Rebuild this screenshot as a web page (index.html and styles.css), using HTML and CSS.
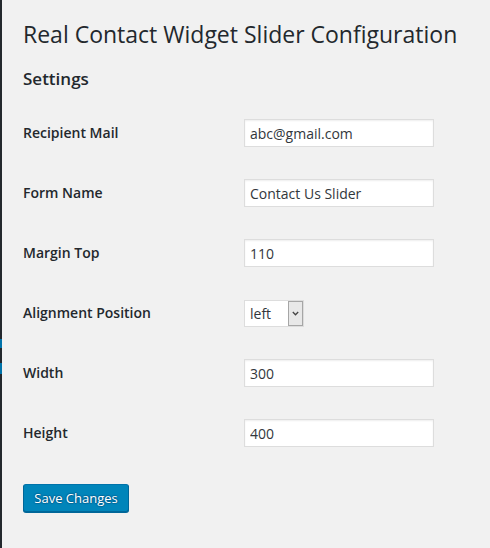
FILE: index.html
```html
<!DOCTYPE html>
<html>
<head>
<meta charset="utf-8">
<link rel="stylesheet" href="styles.css">
</head>
<body>
<div class="page">
  <div class="edge">
    <div class="edge-gap-a"></div>
    <div class="edge-blue edge-blue-a"></div>
    <div class="edge-gap-b"></div>
    <div class="edge-blue edge-blue-b"></div>
  </div>
  <div class="wrap">
    <h1 class="title">Real Contact Widget Slider Configuration</h1>
    <h2 class="section">Settings</h2>
    <form class="form">
      <div class="row">
        <label class="label">Recipient Mail</label>
        <div class="field"><input class="text" type="text" value="abc@gmail.com"></div>
      </div>
      <div class="row">
        <label class="label">Form Name</label>
        <div class="field"><input class="text" type="text" value="Contact Us Slider"></div>
      </div>
      <div class="row">
        <label class="label">Margin Top</label>
        <div class="field"><input class="text" type="text" value="110"></div>
      </div>
      <div class="row">
        <label class="label">Alignment Position</label>
        <div class="field">
          <div class="select-wrap">
            <select class="select"><option>left</option><option>right</option></select>
            <span class="select-arrow"><svg width="7" height="5" viewBox="0 0 7 5"><path d="M0.8 1 L3.5 3.8 L6.2 1" fill="none" stroke="#444" stroke-width="1.3"/></svg></span>
          </div>
        </div>
      </div>
      <div class="row">
        <label class="label">Width</label>
        <div class="field"><input class="text" type="text" value="300"></div>
      </div>
      <div class="row">
        <label class="label">Height</label>
        <div class="field"><input class="text" type="text" value="400"></div>
      </div>
      <div class="submit">
        <button type="button" class="button">Save Changes</button>
      </div>
    </form>
  </div>
</div>
</body>
</html>
```
FILE: styles.css
```css
html, body {
  margin: 0;
  padding: 0;
  background: #f1f1f1;
  height: 100%;
}
body {
  font-family: "Open Sans", "Noto Sans", sans-serif;
  color: #23282d;
  font-size: 13px;
}
.page {
  display: flex;
  min-height: 548px;
}
.edge {
  width: 2px;
  background: #23282d;
  flex: none;
  display: flex;
  flex-direction: column;
}
.edge-gap-a { height: 339px; }
.edge-gap-b { height: 15px; }
.edge-blue { background: #0073aa; }
.edge-blue-a { height: 9px; }
.edge-blue-b { height: 11px; }
.wrap {
  padding: 10px 0 0 21px;
  flex: 1;
}
.title {
  font-size: 23px;
  font-weight: 400;
  line-height: 29px;
  margin: 0;
  padding: 10px 0 4px 0;
}
.section {
  font-size: 17px;
  font-weight: 600;
  line-height: 22px;
  margin: 15px 0 0 0;
}
.form {
  margin-top: 14px;
}
.row {
  display: grid;
  grid-template-columns: 221px 1fr;
  height: 60px;
  align-items: start;
}
.label {
  font-size: 14px;
  font-weight: 600;
  line-height: 18px;
  padding-top: 20px;
}
.field {
  padding-top: 15px;
}
.text {
  box-sizing: border-box;
  width: 190px;
  height: 28px;
  padding: 3px 5px;
  margin: 0;
  border: 1px solid #ddd;
  box-shadow: inset 0 1px 2px rgba(0,0,0,0.07);
  background: #fff;
  color: #32373c;
  font-family: "Open Sans", "Noto Sans", sans-serif;
  font-size: 14px;
  outline: none;
}
.select-wrap {
  position: relative;
  width: 60px;
  height: 27px;
  margin-top: 1px;
}
.select {
  appearance: none;
  -webkit-appearance: none;
  box-sizing: border-box;
  width: 60px;
  height: 27px;
  margin: 0;
  padding: 0 0 0 5px;
  border: 1px solid #ddd;
  background: #fff;
  color: #32373c;
  font-family: "Open Sans", "Noto Sans", sans-serif;
  font-size: 14px;
  outline: none;
  border-radius: 0;
}
.select-arrow {
  position: absolute;
  top: 1px;
  right: 1px;
  width: 15px;
  height: 25px;
  box-sizing: border-box;
  border: 1px solid #a6a6a6;
  background: #e8e8e8;
  display: flex;
  align-items: center;
  justify-content: center;
}
.submit {
  padding-top: 20px;
}
.button {
  box-sizing: border-box;
  width: 106px;
  height: 28px;
  padding: 0 0 1px;
  border: 1px solid;
  border-color: #0073aa #006799 #006799;
  border-radius: 3px;
  background: #0085ba;
  box-shadow: 0 1px 0 #006799;
  color: #fff;
  font-family: "Open Sans", "Noto Sans", sans-serif;
  font-size: 13px;
  line-height: 26px;
  text-align: center;
  text-shadow: 0 -1px 1px #006799, 1px 0 1px #006799, 0 1px 1px #006799, -1px 0 1px #006799;
  cursor: pointer;
}
```
